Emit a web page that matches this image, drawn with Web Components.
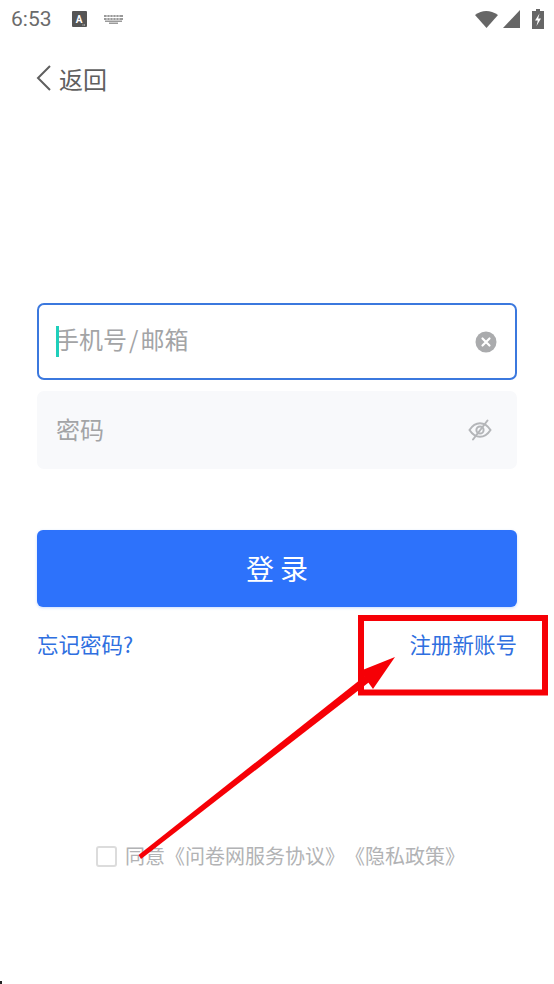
<!DOCTYPE html>
<html lang="zh">
<head>
<meta charset="utf-8">
<title>登录</title>
<style>
    html, body { margin: 0; padding: 0; background: #fff; }
    body { font-family: "Noto Sans CJK SC", "Noto Sans", sans-serif; }
</style>
</head>
<body>
<login-page>
    <status-bar slot="status" time="6:53"></status-bar>
    <back-nav slot="nav">返回</back-nav>
    <text-field slot="phone" focused>
        手机号<span style="margin:0 2px">/</span>邮箱
        <svg slot="icon" width="22" height="22" viewBox="0 0 22 22">
            <circle cx="11" cy="11" r="10.500" fill="#aaabad"/>
            <path d="M7.500 7.500l7 7M14.500 7.500l-7 7" stroke="#fff" stroke-width="2.200" stroke-linecap="round"/>
        </svg>
    </text-field>
    <text-field slot="password">
        密码
        <svg slot="icon" width="26" height="26" viewBox="0 0 26 26" fill="none" stroke="#b4b6b9" stroke-width="2">
            <path d="M2.500 13c3-4.600 6.500-6.800 10.500-6.800s7.500 2.200 10.500 6.800c-3 4.600-6.500 6.800-10.500 6.800S5.500 17.600 2.500 13z"/>
            <circle cx="13" cy="13" r="3.600"/>
            <path d="M20.500 3.500L6 22.500" stroke-linecap="round"/>
        </svg>
    </text-field>
    <primary-button slot="submit">登录</primary-button>
    <link-row slot="links">
        <span slot="left">忘记密码?</span>
        <span slot="right">注册新账号</span>
    </link-row>
    <agree-row slot="agree">同意《问卷网服务协议》《隐私政策》</agree-row>
</login-page>
<red-annotation></red-annotation>

<script>
class StatusBar extends HTMLElement {
    constructor() {
        super();
        this.attachShadow({mode: 'open'});
        this.shadowRoot.innerHTML = `
            <style>
                :host { display: flex; align-items: center; height: 38px; padding: 0 10px 0 11px; color: #6b6b6b; }
                .time { font: 21px Roboto, "Liberation Sans", sans-serif; width: 50px; }
                .left { display: flex; align-items: center; gap: 11px; flex: 1; }
                .right { display: flex; align-items: center; gap: 5px; }
                .keys { margin-left: 6px; }
                .batt { margin-left: 7px; }
            </style>
            <div class="left">
                <span class="time">${this.getAttribute('time')}</span>
                <svg width="15" height="16" viewBox="0 0 15 16">
                    <rect width="15" height="16" rx="1" fill="#555"/>
                    <text x="7" y="11.500" font-family="Roboto, sans-serif" font-size="10" font-weight="700" text-anchor="middle" fill="#fff">A</text>
                    <path d="M10.500 14h3" stroke="#ddd" stroke-dasharray="1 .5"/>
                </svg>
                <svg class="keys" width="19" height="9" viewBox="0 0 19 9" fill="#9a9a9a">
                    <path d="M0 0h19v2H0zM0 3h19v2H0zM1 5.500h17V7H1zM5 7.500h9V9H5z"/>
                    <path d="M3 0v5M6 0v5M9 0v5M12 0v5M15 0v5" stroke="#fff" stroke-width=".7"/>
                </svg>
            </div>
            <div class="right">
                <svg width="23" height="20" viewBox="0 0 23 20"><path d="M0 6Q11-2 23 6L11.500 19z" fill="#666"/></svg>
                <svg width="17" height="20" viewBox="0 0 17 20"><path d="M17 1v18H0z" fill="#666"/></svg>
                <svg class="batt" width="12" height="20" viewBox="0 0 12 20">
                    <path d="M4 0h4v2h4v18H0V2h4z" fill="#666"/>
                    <path d="M7.500 4.500L3 11.500h2.800L4.500 17l4.500-7.500H6.200z" fill="#fff"/>
                </svg>
            </div>
        `;
    }
}
customElements.define('status-bar', StatusBar);

class BackNav extends HTMLElement {
    constructor() {
        super();
        this.attachShadow({mode: 'open'});
        this.shadowRoot.innerHTML = `
            <style>
                :host { display: flex; align-items: center; gap: 8px; height: 34px; padding-left: 36px; font-size: 24px; color: #5f5f5f; }
                svg { display: block; }
            </style>
            <svg width="15" height="26" viewBox="0 0 15 26" fill="none" stroke="#5f5f5f" stroke-width="2">
                <path d="M14 1L2 13l12 12"/>
            </svg>
            <span><slot></slot></span>
        `;
    }
}
customElements.define('back-nav', BackNav);

const $field = document.createElement('template');
$field.innerHTML = `
    <style>
        :host { display: flex; align-items: center; box-sizing: border-box; height: 78px; padding: 0 24px 0 19px;
                border-radius: 7px; background: #f8f9fb; font-size: 24px; color: #a3a4a6; position: relative; }
        :host([focused]) { height: 77px; background: #fff; border: 2px solid #3b78de; padding: 0 18px 0 16px; }
        .text { flex: 1; white-space: nowrap; padding-bottom: 4px; }
        :host([focused]) .text { padding-bottom: 6px; }
        .caret { display: none; position: absolute; left: 17px; top: 21px; width: 3px; height: 31px; background: #1fcfbb; }
        :host([focused]) .caret { display: block; }
        ::slotted(svg) { display: block; }
    </style>
    <span class="caret"></span>
    <span class="text"><slot></slot></span>
    <slot name="icon"></slot>
`;
class TextField extends HTMLElement {
    constructor() {
        super();
        this.attachShadow({mode: 'open'});
        this.shadowRoot.appendChild($field.content.cloneNode(true));
    }
}
customElements.define('text-field', TextField);

class PrimaryButton extends HTMLElement {
    constructor() {
        super();
        this.attachShadow({mode: 'open'});
        this.shadowRoot.innerHTML = `
            <style>
                :host { display: flex; align-items: center; justify-content: center; box-sizing: border-box; height: 77px; padding-bottom: 2px; border-radius: 6px;
                        background: #2d72fb; color: #fff; font-size: 28px; letter-spacing: 6px; text-indent: 6px;
                        box-shadow: 0 1px 3px rgba(45,114,251,.25); }
            </style>
            <slot></slot>
        `;
    }
}
customElements.define('primary-button', PrimaryButton);

class LinkRow extends HTMLElement {
    constructor() {
        super();
        this.attachShadow({mode: 'open'});
        this.shadowRoot.innerHTML = `
            <style>
                :host { display: flex; justify-content: space-between; align-items: center; font-size: 21.500px; line-height: 30px; color: #2f6fe0; }
            </style>
            <slot name="left"></slot>
            <slot name="right"></slot>
        `;
    }
}
customElements.define('link-row', LinkRow);

class AgreeRow extends HTMLElement {
    constructor() {
        super();
        this.attachShadow({mode: 'open'});
        this.shadowRoot.innerHTML = `
            <style>
                :host { display: flex; align-items: center; justify-content: center; gap: 8px; padding-left: 7px; font-size: 20px; line-height: 30px; color: #b2b3b5; text-spacing-trim: space-all; }
                .box { width: 17px; height: 17px; border: 2px solid #dcdcdc; border-radius: 3px; }
            </style>
            <span class="box"></span>
            <span><slot></slot></span>
        `;
    }
}
customElements.define('agree-row', AgreeRow);

class LoginPage extends HTMLElement {
    constructor() {
        super();
        this.attachShadow({mode: 'open'});
        this.shadowRoot.innerHTML = `
            <style>
                :host { display: flex; flex-direction: column; box-sizing: border-box; height: 984px; }
                .nav { margin-top: 23px; }
                .form { display: flex; flex-direction: column; margin: 208px 37px 0; }
                .pw { margin-top: 11px; }
                .submit { margin-top: 61px; }
                .links { margin-top: 22px; }
                .agree { margin-top: 182px; }
            </style>
            <slot name="status"></slot>
            <div class="nav"><slot name="nav"></slot></div>
            <div class="form">
                <slot name="phone"></slot>
                <div class="pw"><slot name="password"></slot></div>
                <div class="submit"><slot name="submit"></slot></div>
                <div class="links"><slot name="links"></slot></div>
            </div>
            <div class="agree"><slot name="agree"></slot></div>
        `;
    }
}
customElements.define('login-page', LoginPage);

// red markup drawn on top of the screenshot
class RedAnnotation extends HTMLElement {
    constructor() {
        super();
        this.attachShadow({mode: 'open'});
        this.shadowRoot.innerHTML = `
            <style>
                :host { position: absolute; left: 0; top: 0; width: 554px; height: 984px; pointer-events: none; }
                svg { display: block; }
            </style>
            <svg width="554" height="984" viewBox="0 0 554 984">
                <rect x="361" y="618" width="184" height="74.500" fill="none" stroke="#f60006" stroke-width="6"/>
                <path d="M138.500 855L141 859L372.500 679.500L368 673.500z" fill="#f60006"/>
                <path d="M395 657L360 671L373 689z" fill="#f60006"/>
                <rect x="0" y="981" width="2" height="3" fill="#222"/>
            </svg>
        `;
    }
}
customElements.define('red-annotation', RedAnnotation);
</script>
</body>
</html>
